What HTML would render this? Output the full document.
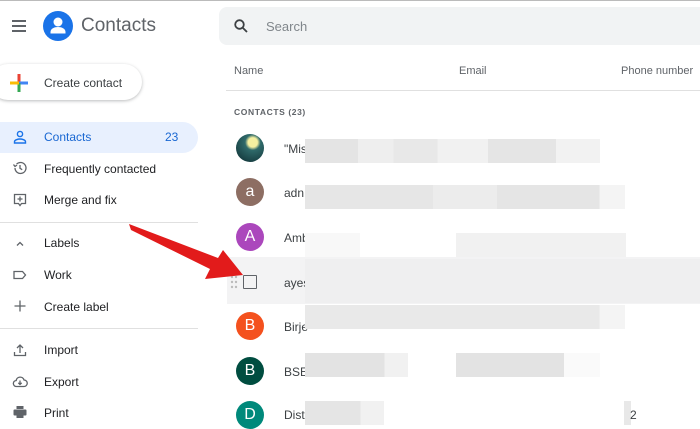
<!DOCTYPE html>
<html><head><style>
body{margin:0;width:700px;height:425px;overflow:hidden;background:#fff;font-family:"Liberation Sans",sans-serif;position:relative;color:#202124}
.a{position:absolute}
.nav{position:absolute;left:44px;font-size:12px;color:#202124}
.ic{position:absolute;left:12px}
.av{position:absolute;left:236px;width:28px;height:28px;border-radius:50%;color:#fff;font-size:16px;text-align:center;line-height:28px}
.nm{position:absolute;left:284px;font-size:12px;color:#3c4043}
.b{position:absolute;height:24px}
</style></head><body>
<div class="a" style="left:0;top:0;width:700px;height:1px;background:#bbb"></div>
<div class="a" style="left:12px;top:20px;width:14px;height:2px;background:#5f6368"></div>
<div class="a" style="left:12px;top:25px;width:14px;height:2px;background:#5f6368"></div>
<div class="a" style="left:12px;top:30px;width:14px;height:2px;background:#5f6368"></div>
<svg class="a" style="left:43px;top:11px" width="30" height="30" viewBox="0 0 30 30"><circle cx="15" cy="15" r="15" fill="#1a73e8"/><circle cx="15" cy="11" r="4.5" fill="#fff"/><path d="M7.5 21c0-3.5 4-5 7.5-5s7.5 1.5 7.5 5v1.5h-15z" fill="#fff"/></svg>
<div class="a" style="left:81px;top:15px;font-size:19px;color:#5f6368">Contacts</div>
<div class="a" style="left:-10px;top:64px;width:152px;height:36px;border-radius:18px;background:#fff;box-shadow:0 1px 3px rgba(60,64,67,.35)"></div>
<svg class="a" style="left:9px;top:73px" width="20" height="20" viewBox="0 0 20 20"><rect x="8.5" y="1" width="3" height="9" fill="#ea4335"/><rect x="10" y="8.5" width="9" height="3" fill="#4285f4"/><rect x="8.5" y="10" width="3" height="9" fill="#34a853"/><rect x="1" y="8.5" width="9" height="3" fill="#fbbc04"/></svg>
<div class="a" style="left:44px;top:76px;font-size:12px;color:#3c4043">Create contact</div>
<div class="a" style="left:0;top:122px;width:198px;height:31px;background:#e8f0fe;border-radius:0 16px 16px 0"></div>
<svg class="ic" style="top:129px" width="16" height="16" viewBox="0 0 16 16" fill="none" stroke="#1a73e8" stroke-width="1.4"><circle cx="8" cy="5" r="2.6"/><path d="M2.5 14v-1.3c0-1.8 3.5-2.7 5.5-2.7s5.5.9 5.5 2.7V14z"/></svg>
<div class="nav" style="top:130px;color:#1967d2">Contacts</div>
<div class="a" style="left:165px;top:130px;font-size:12px;color:#1967d2">23</div>
<svg class="ic" style="top:160px" width="16" height="16" viewBox="0 0 16 16" fill="none" stroke="#5f6368" stroke-width="1.3"><path d="M3 8a5.5 5.5 0 1 0 1.6-3.9"/><path d="M1.5 4.5l1.5 2 2-1.5"/><path d="M8 5v3.3l2.2 1.4"/></svg>
<div class="nav" style="top:162px">Frequently contacted</div>
<svg class="ic" style="top:192px" width="16" height="16" viewBox="0 0 16 16" fill="none" stroke="#5f6368" stroke-width="1.3"><path d="M2.5 2.5h11v9h-4L8 13.5 6.5 11.5h-4z"/><path d="M8 4.5v5M5.5 7h5"/></svg>
<div class="nav" style="top:193px">Merge and fix</div>
<div class="a" style="left:0;top:222px;width:198px;height:1px;background:#e0e0e0"></div>
<svg class="ic" style="top:236px" width="16" height="16" viewBox="0 0 16 16" fill="none" stroke="#5f6368" stroke-width="1.3"><path d="M5 9.5l3-3 3 3"/></svg>
<div class="nav" style="top:236px">Labels</div>
<svg class="ic" style="top:267px" width="16" height="16" viewBox="0 0 16 16" fill="none" stroke="#5f6368" stroke-width="1.3"><path d="M2 4.5h8.5l3 3.5-3 3.5H2z"/></svg>
<div class="nav" style="top:268px">Work</div>
<svg class="ic" style="top:298px" width="16" height="16" viewBox="0 0 16 16" fill="none" stroke="#5f6368" stroke-width="1.3"><path d="M8 2.5v11M2.5 8h11"/></svg>
<div class="nav" style="top:300px">Create label</div>
<div class="a" style="left:0;top:328px;width:198px;height:1px;background:#e0e0e0"></div>
<svg class="ic" style="top:342px" width="16" height="16" viewBox="0 0 16 16" fill="none" stroke="#5f6368" stroke-width="1.3"><path d="M8 11V3M5 6l3-3 3 3M2.5 10v3.5h11V10"/></svg>
<div class="nav" style="top:343px">Import</div>
<svg class="ic" style="top:374px" width="16" height="16" viewBox="0 0 16 16" fill="none" stroke="#5f6368" stroke-width="1.3"><path d="M4.5 12.5a3 3 0 0 1-.3-6A4 4 0 0 1 12 6a3.2 3.2 0 0 1 0 6.5z"/><path d="M8 6.5v4M6.3 8.8 8 10.5l1.7-1.7"/></svg>
<div class="nav" style="top:375px">Export</div>
<svg class="ic" style="top:404px" width="16" height="16" viewBox="0 0 16 16"><rect x="4.5" y="2" width="7" height="3" fill="#5f6368"/><rect x="1.5" y="5.5" width="13" height="6" rx="1" fill="#5f6368"/><rect x="4.5" y="10" width="7" height="4" fill="#5f6368"/></svg>
<div class="nav" style="top:406px">Print</div>
<div class="a" style="left:219px;top:7px;width:490px;height:38px;border-radius:8px;background:#f1f3f4"></div>
<svg class="a" style="left:233px;top:18px" width="16" height="16" viewBox="0 0 16 16" fill="none" stroke="#3c4043" stroke-width="1.8"><circle cx="6.5" cy="6.5" r="4.3"/><path d="M9.7 9.7l4.3 4.3"/></svg>
<div class="a" style="left:266px;top:19px;font-size:13px;color:#80868b">Search</div>
<div class="a" style="left:234px;top:65px;font-size:11px;color:#5f6368">Name</div>
<div class="a" style="left:459px;top:65px;font-size:11px;color:#5f6368">Email</div>
<div class="a" style="left:621px;top:65px;font-size:11px;color:#5f6368">Phone number</div>
<div class="a" style="left:226px;top:90px;width:474px;height:1px;background:#e0e0e0"></div>
<div class="a" style="left:234px;top:107px;font-size:8.5px;letter-spacing:.6px;color:#5f6368;font-weight:bold">CONTACTS (23)</div>
<div class="a" style="left:227px;top:257px;width:473px;height:47px;background:#f3f3f4"></div>
<div class="av" style="top:134px;background:radial-gradient(circle at 60% 30%,#f5f0a0 0 18%,#2f6a6a 30%,#0d2b30 100%)"></div>
<div class="nm" style="top:142px">"Mis</div>
<div class="b" style="left:305px;top:139px;width:295px;background:linear-gradient(90deg,#e4e4e4 0 18%,#eee 18% 30%,#e8e8e8 30% 45%,#f1f1f1 45% 62%,#e5e5e5 62% 85%,#f2f2f2 85%)"></div>
<div class="av" style="top:178px;background:#8d6e63">a</div>
<div class="nm" style="top:186px">adn</div>
<div class="b" style="left:305px;top:185px;width:320px;background:linear-gradient(90deg,#e6e6e6 0 40%,#ececec 40% 60%,#e5e5e5 60% 92%,#f4f4f4 92%)"></div>
<div class="av" style="top:223px;background:#ab47bc">A</div>
<div class="nm" style="top:231px">Amb</div>
<div class="b" style="left:305px;top:233px;width:55px;background:#f8f8f8"></div>
<div class="b" style="left:456px;top:233px;width:170px;background:#f1f1f1"></div>
<svg class="a" style="left:230px;top:275px" width="8" height="14"><g fill="#bbb"><circle cx="2" cy="2" r="1.2"/><circle cx="6" cy="2" r="1.2"/><circle cx="2" cy="7" r="1.2"/><circle cx="6" cy="7" r="1.2"/><circle cx="2" cy="12" r="1.2"/><circle cx="6" cy="12" r="1.2"/></g></svg>
<div class="a" style="left:243px;top:275px;width:12px;height:12px;border:1.6px solid #5f6368;border-radius:1px"></div>
<div class="nm" style="top:276px">ayes</div>
<div class="b" style="left:305px;top:259px;width:395px;height:44px;background:#efeff0"></div>
<div class="av" style="top:312px;background:#f4511e">B</div>
<div class="nm" style="top:320px">Birje</div>
<div class="b" style="left:305px;top:305px;width:320px;background:linear-gradient(90deg,#e9e9e9 0 92%,#f4f4f4 92%)"></div>
<div class="av" style="top:357px;background:#004d40">B</div>
<div class="nm" style="top:365px">BSE</div>
<div class="b" style="left:305px;top:353px;width:103px;background:linear-gradient(90deg,#e3e3e3 0 77%,#f1f1f1 77%)"></div>
<div class="b" style="left:456px;top:353px;width:144px;background:linear-gradient(90deg,#e3e3e3 0 75%,#fafafa 75%)"></div>
<div class="av" style="top:401px;background:#00897b">D</div>
<div class="nm" style="top:408px">Dist</div>
<div class="b" style="left:305px;top:401px;width:79px;background:linear-gradient(90deg,#e5e5e5 0 70%,#f1f1f1 70%)"></div>
<div class="b" style="left:624px;top:401px;width:7px;background:#e8e8e8"></div>
<div class="nm" style="left:630px;top:408px">2</div>
<svg class="a" style="left:0;top:0" width="700" height="425"><polygon points="129,224 131,230 210,269 205,279 243,275 223,250 218,258" fill="#e21b1b"/></svg>
</body></html>
